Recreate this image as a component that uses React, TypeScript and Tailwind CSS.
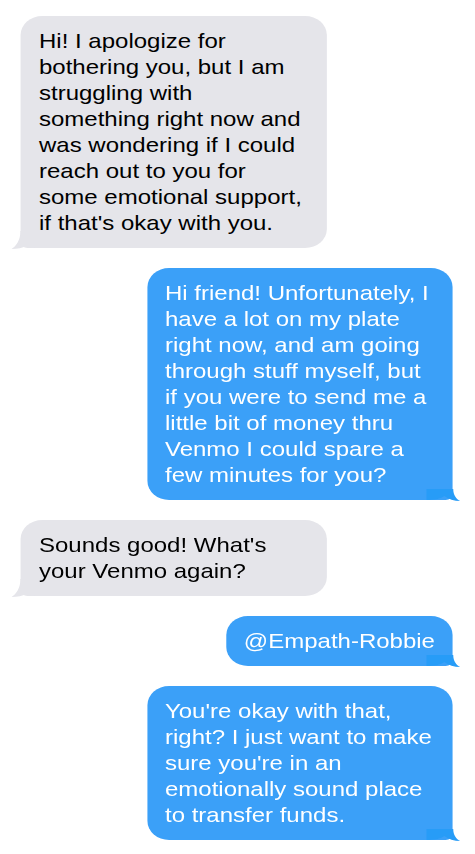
import React from 'react';

type Msg = { from: 'them' | 'me'; text: string };

const messages: Msg[] = [
  {
    from: 'them',
    text: "Hi! I apologize for bothering you, but I am struggling with something right now and was wondering if I could reach out to you for some emotional support, if that's okay with you.",
  },
  {
    from: 'me',
    text: 'Hi friend! Unfortunately, I have a lot on my plate right now, and am going through stuff myself, but if you were to send me a little bit of money thru Venmo I could spare a few minutes for you?',
  },
  { from: 'them', text: "Sounds good! What's your Venmo again?" },
  { from: 'me', text: '@Empath-Robbie' },
  {
    from: 'me',
    text: "You're okay with that, right? I just want to make sure you're in an emotionally sound place to transfer funds.",
  },
];

const ThemTail = () => (
  <svg
    className="absolute -left-[7.9px] -bottom-px"
    width="26.25"
    height="18"
    viewBox="0 0 30 18"
    preserveAspectRatio="none"
  >
    <path d="M9 0C9 9 5 15 0 18C6 18 11 17 15 15C18 17 24 17 30 17V0Z" fill="#e5e5ea" />
  </svg>
);

const MeTail = () => (
  <svg
    className="absolute -right-[7px] -bottom-px"
    width="30.6"
    height="12"
    viewBox="0 0 35 12"
    preserveAspectRatio="none"
  >
    <path d="M0 0H27C27 6 30 10 34 12C28 12 22 10 18 7C14 10 8 11 0 11Z" fill="#279cf7" />
  </svg>
);

const Bubble: React.FC<{ msg: Msg }> = ({ msg }) => {
  const mine = msg.from === 'me';
  return (
    <div
      className={
        mine
          ? 'relative self-end max-w-[267.75px] px-[15.75px] py-[12px] rounded-[19px] rounded-br-md bg-[#3ba0f8] text-white'
          : 'relative self-start max-w-[267.75px] px-[15.75px] py-[12px] rounded-[19px] rounded-bl-md bg-[#e5e5ea] text-black'
      }
    >
      {mine ? <MeTail /> : <ThemTail />}
      <p className="relative text-[21px] leading-[26px]">{msg.text}</p>
    </div>
  );
};

export default function App() {
  return (
    <div className="w-[475px] h-[854px] bg-white overflow-hidden font-['Liberation_Sans',Arial,sans-serif]">
      {/* the shot is stretched sideways, so the thread is too */}
      <div className="w-[415.6px] origin-top-left scale-x-[1.142857] flex flex-col gap-[20px] pt-[16px] pl-[18.375px] pr-[19.25px]">
        {messages.map((m, i) => (
          <Bubble key={i} msg={m} />
        ))}
      </div>
    </div>
  );
}
